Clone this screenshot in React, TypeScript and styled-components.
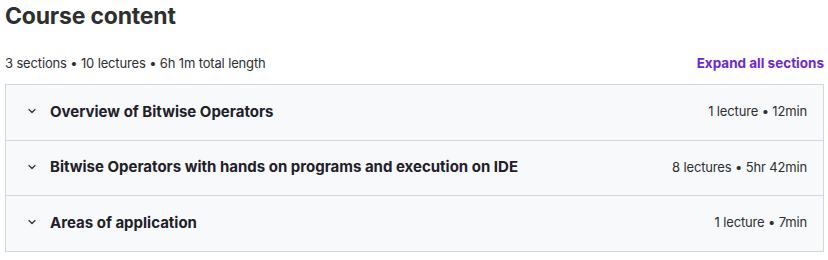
import React from "react";
import styled, { createGlobalStyle } from "styled-components";

const Global = createGlobalStyle`
  body { margin: 0; background: #fff; font-family: Inter, "Noto Sans", sans-serif; color: #2d2f31; }
`;

const Page = styled.div`
  padding: 0 4px 0 5px;
`;

const Title = styled.h2`
  margin: 0;
  padding-top: 1px;
  font-size: 23px;
  font-weight: 700;
  line-height: 30px;
  letter-spacing: -0.2px;
  color: #2d2f31;
`;

const Header = styled.div`
  display: flex;
  justify-content: space-between;
  align-items: center;
  margin-top: 21px;
  height: 22px;
  margin-bottom: 10px;
`;

const Summary = styled.span`
  font-size: 13px;
  letter-spacing: -0.15px;
  color: #2d2f31;
`;

const ExpandLink = styled.button`
  border: none;
  background: none;
  padding: 0;
  font-family: inherit;
  font-size: 13.5px;
  font-weight: 700;
  color: #6d28d2;
  cursor: pointer;
`;

const Box = styled.div`
  border: 1px solid #d1d7dc;
  background: #f7f9fa;
`;

const Row = styled.div<{ $h: number }>`
  display: flex;
  align-items: center;
  box-sizing: border-box;
  height: ${(p) => p.$h}px;
  padding: 0 16px 3px 21px;
  & + & { border-top: 1px solid #d1d7dc; }
`;

const Chevron = styled.svg`
  width: 10px;
  height: 10px;
  margin-right: 13px;
  flex: none;
`;

const SectionTitle = styled.span`
  flex: 1;
  font-size: 15px;
  font-weight: 700;
  color: #1f2029;
`;

const Meta = styled.span`
  font-size: 13px;
  letter-spacing: -0.15px;
  color: #2d2f31;
`;

const sections = [
  { t: "Overview of Bitwise Operators", m: "1 lecture • 12min", h: 55 },
  { t: "Bitwise Operators with hands on programs and execution on IDE", m: "8 lectures • 5hr 42min", h: 55 },
  { t: "Areas of application", m: "1 lecture • 7min", h: 56 },
];

export default function App() {
  return (
    <Page>
      <Global />
      <Title>Course content</Title>
      <Header>
        <Summary>3 sections • 10 lectures • 6h 1m total length</Summary>
        <ExpandLink>Expand all sections</ExpandLink>
      </Header>
      <Box>
        {sections.map((s) => (
          <Row key={s.t} $h={s.h}>
            <Chevron viewBox="0 0 10 10">
              <path d="M2 3.5 L5 6.5 L8 3.5" fill="none" stroke="#2d2f31" strokeWidth="1.2" strokeLinecap="round" strokeLinejoin="round" />
            </Chevron>
            <SectionTitle>{s.t}</SectionTitle>
            <Meta>{s.m}</Meta>
          </Row>
        ))}
      </Box>
    </Page>
  );
}
